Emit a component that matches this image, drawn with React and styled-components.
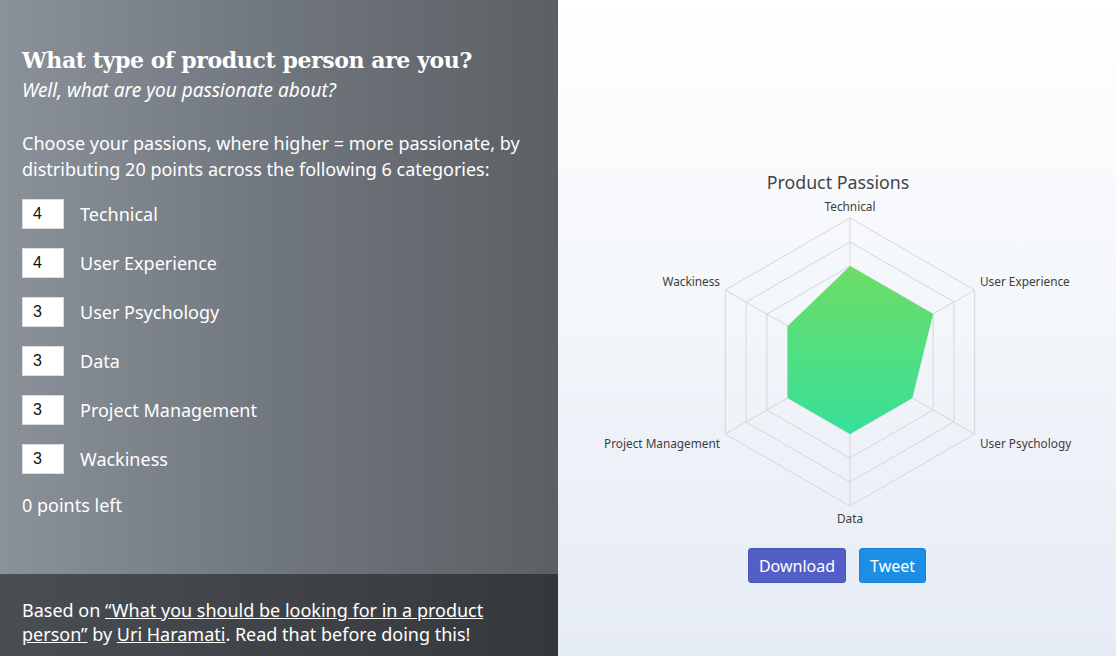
import React from "react";
import styled, { createGlobalStyle } from "styled-components";

const GlobalStyle = createGlobalStyle`
    html, body {
        margin: 0;
        padding: 0;
    }
    body {
        font-family: "Noto Sans", "Liberation Sans", sans-serif;
    }
`

const Page = styled.div`
    display: flex;
    width: 1116px;
    height: 656px;
    overflow: hidden;
`

const LeftPanel = styled.div`
    display: flex;
    flex-direction: column;
    width: 558px;
    flex-shrink: 0;
    background: linear-gradient(90deg, #8a9199 0%, #70767d 50%, #5b6064 100%);
    color: #fff;
`

const Intro = styled.div`
    flex: 1;
    padding: 44px 22px 0 22px;
`

const Heading = styled.h1`
    margin: 0;
    font-family: "DejaVu Serif", "Liberation Serif", serif;
    font-weight: bold;
    font-size: 22px;
    line-height: 32px;
    letter-spacing: -0.4px;
`

const Subtitle = styled.p`
    margin: 0;
    font-style: italic;
    font-size: 19px;
    line-height: 28px;
`

const Description = styled.p`
    margin: 26px 0 17px 0;
    font-size: 18px;
    line-height: 26px;
`

const CategoryRow = styled.div`
    display: flex;
    align-items: center;
    height: 30px;
    margin-bottom: 19px;
`

const PointsInput = styled.input`
    box-sizing: border-box;
    width: 42px;
    height: 30px;
    padding: 0 0 0 10px;
    border: 1px solid #d9dde2;
    background: #fff;
    color: #111;
    font-family: "Liberation Sans", sans-serif;
    font-size: 16px;
`

const CategoryName = styled.span`
    margin-left: 16px;
    font-size: 18px;
`

const PointsLeft = styled.div`
    margin-top: 1px;
    font-size: 18px;
`

const Footer = styled.div`
    height: 82px;
    box-sizing: border-box;
    padding: 24px 22px 0 22px;
    background: linear-gradient(90deg, #494e53 0%, #35383b 100%);
    font-size: 18px;
    line-height: 24px;
`

const FooterLink = styled.a`
    color: #fff;
    text-decoration: underline;
`

const RightPanel = styled.div`
    flex: 1;
    display: flex;
    flex-direction: column;
    align-items: center;
    padding-top: 160px;
    background: linear-gradient(180deg, #ffffff 0%, #e6ecf5 100%);
`

const ChartSvg = styled.svg`
    display: block;
    font-family: "Noto Sans", "Liberation Sans", sans-serif;
`

const ButtonRow = styled.div`
    display: flex;
    gap: 13px;
    margin-top: 18px;
`

const ActionButton = styled.button`
    height: 35px;
    padding: 0 ${props => props.pad}px;
    border: 1px solid ${props => props.edge};
    border-radius: 3px;
    background: ${props => props.color};
    color: #fff;
    font-family: "Noto Sans", "Liberation Sans", sans-serif;
    font-size: 16px;
    cursor: pointer;
`

const categories = [
    { name: "Technical", points: 4 },
    { name: "User Experience", points: 4 },
    { name: "User Psychology", points: 3 },
    { name: "Data", points: 3 },
    { name: "Project Management", points: 3 },
    { name: "Wackiness", points: 3 },
];

const CX = 292;
const CY = 202;
const R = 144;
const MAX = 6;

function point(i, value) {
    const angle = (-90 + i * 60) * Math.PI / 180;
    const r = (value / MAX) * R;
    return [CX + r * Math.cos(angle), CY + r * Math.sin(angle)];
}

function ring(value) {
    return categories.map((c, i) => point(i, value).join(",")).join(" ");
}

function RadarChart() {
    const shape = categories.map((c, i) => point(i, c.points).join(",")).join(" ");

    return (
        <ChartSvg width="558" height="370" viewBox="0 0 558 370">
            <defs>
                <linearGradient id="passion" x1="0" y1="0" x2="0" y2="1">
                    <stop offset="0%" stopColor="#6ddd66" />
                    <stop offset="100%" stopColor="#37e09a" />
                </linearGradient>
            </defs>
            <text x="280" y="29" textAnchor="middle" fontSize="17.8" fill="#444">Product Passions</text>
            {[1, 2, 3, 4, 5, 6].map(v => (
                <polygon key={v} points={ring(v)} fill="none" stroke="#d3d6db" strokeWidth="1" />
            ))}
            {categories.map((c, i) => {
                const [x, y] = point(i, MAX);
                return <line key={c.name} x1={CX} y1={CY} x2={x} y2={y} stroke="#d3d6db" strokeWidth="1" />
            })}
            <polygon points={shape} fill="url(#passion)" />
            <g fontSize="11.8" fill="#3d3d3d">
                <text x="292" y="51" textAnchor="middle">Technical</text>
                <text x="422" y="126">User Experience</text>
                <text x="422" y="288">User Psychology</text>
                <text x="292" y="363" textAnchor="middle">Data</text>
                <text x="162" y="288" textAnchor="end">Project Management</text>
                <text x="162" y="126" textAnchor="end">Wackiness</text>
            </g>
        </ChartSvg>
    );
}

function App() {
    return (
        <Page>
            <GlobalStyle />
            <LeftPanel>
                <Intro>
                    <Heading>What type of product person are you?</Heading>
                    <Subtitle>Well, what are you passionate about?</Subtitle>
                    <Description>
                        Choose your passions, where higher = more passionate, by distributing 20 points across the following 6 categories:
                    </Description>
                    {categories.map(c => (
                        <CategoryRow key={c.name}>
                            <PointsInput type="text" defaultValue={c.points} />
                            <CategoryName>{c.name}</CategoryName>
                        </CategoryRow>
                    ))}
                    <PointsLeft>0 points left</PointsLeft>
                </Intro>
                <Footer>
                    Based on <FooterLink href="#">“What you should be looking for in a product person”</FooterLink> by <FooterLink href="#">Uri Haramati</FooterLink>. Read that before doing this!
                </Footer>
            </LeftPanel>
            <RightPanel>
                <RadarChart />
                <ButtonRow>
                    <ActionButton color="#535fc7" edge="#4a55b8" pad={10}>Download</ActionButton>
                    <ActionButton color="#1c8fe5" edge="#1882d2" pad={10}>Tweet</ActionButton>
                </ButtonRow>
            </RightPanel>
        </Page>
    );
}

export default App;
